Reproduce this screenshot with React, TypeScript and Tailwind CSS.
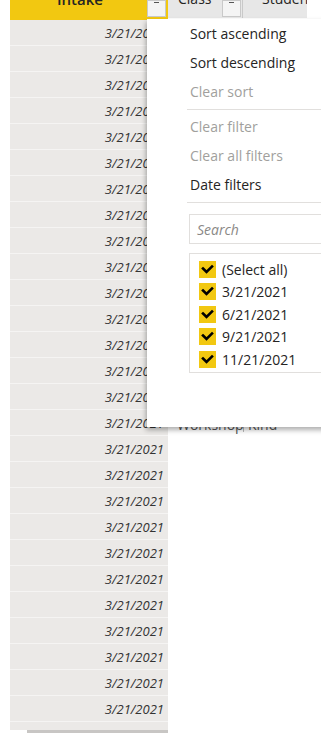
const dates = Array.from({ length: 27 }, () => '3/21/2021');

const menuItems = [
  { label: 'Sort ascending', disabled: false },
  { label: 'Sort descending', disabled: false },
  { label: 'Clear sort', disabled: true },
  { sep: true },
  { label: 'Clear filter', disabled: true },
  { label: 'Clear all filters', disabled: true },
  { label: 'Date filters', disabled: false },
  { sep: true },
];

const options = ['(Select all)', '3/21/2021', '6/21/2021', '9/21/2021', '11/21/2021'];

function HeaderButton() {
  return (
    <div className="w-[19px] h-[17px] bg-[#f4f4f4] border border-[#c9c9c9] flex items-start justify-center overflow-hidden">
      <span className="block w-[5px] h-[1px] bg-[#555] mt-[1px]" />
    </div>
  );
}

function Check() {
  return (
    <div className="w-[17px] h-[17px] bg-[#f2c811] flex items-center justify-center shrink-0">
      <svg width="13" height="13" viewBox="0 0 13 13">
        <path d="M2 5.5 L5.5 9 L11 3.5" fill="none" stroke="#000" strokeWidth="2.6" strokeLinecap="square" />
      </svg>
    </div>
  );
}

export default function App() {
  return (
    <div
      className="relative w-[321px] h-[738px] overflow-hidden bg-white text-[#252423]"
      style={{ fontFamily: '"Open Sans", "Noto Sans", sans-serif' }}
    >
      <div className="flex h-[730px] overflow-hidden">
        <div className="w-[10px] shrink-0" />

        {/* Intake column (selected) */}
        <div className="w-[158px] shrink-0 bg-[#ebe9e7]">
          <div className="relative h-[20px] bg-[#f2c811] overflow-hidden">
            <span className="absolute left-[47px] top-[-10px] text-[15px] font-semibold leading-[18px]">Intake</span>
            <div className="absolute left-[137px] top-0">
              <HeaderButton />
            </div>
          </div>
          {dates.map((d, i) => (
            <div
              key={i}
              className="h-[26px] border-b border-[#f5f4f3] flex items-center justify-end pr-[4px] pt-[2px] text-[13px] italic text-[#333]"
            >
              {d}
            </div>
          ))}
        </div>

        {/* other columns */}
        <div className="flex-1">
          <div className="flex h-[18px] bg-[#e7e7e7] w-[139px] overflow-hidden">
            <div className="relative w-[54px] text-[14px] leading-[18px]">
              <span className="absolute left-[10px] top-[-10px]">Class</span>
            </div>
            <HeaderButton />
            <div className="w-[2px] border-r border-[#c9c9c9]" />
            <div className="relative flex-1 text-[14px] leading-[18px]">
              <span className="absolute left-[19px] top-[-10px]">Student</span>
            </div>
          </div>
          <div className="h-[392px]" />
          <div className="flex h-[26px] w-[139px] items-center pt-[2px] text-[14px] text-[#555]">
            <div className="w-[75px] pl-[9px] overflow-hidden whitespace-nowrap">Workshop -</div>
            <div className="h-[16px] border-l border-[#bbb]" />
            <div className="pl-[4px] whitespace-nowrap">Kind</div>
          </div>
        </div>
      </div>

      {/* horizontal scrollbar */}
      <div className="h-[3px] ml-[27px] w-[141px] bg-[#c8c6c4]" />

      {/* filter popup */}
      <div className="absolute left-[147px] top-[19px] w-[190px] h-[408px] bg-white shadow-[-1px_3px_5px_rgba(0,0,0,0.32)]">
        {menuItems.map((m, i) =>
          'sep' in m ? (
            <div key={i} className="h-[6px] flex items-center pl-[40px]">
              <div className="h-[1px] w-full bg-[#e1dfdd]" />
            </div>
          ) : (
            <div
              key={i}
              className={`h-[29px] flex items-center pl-[43px] text-[14px] ${m.disabled ? 'text-[#a19f9d]' : 'text-[#252423]'}`}
            >
              {m.label}
            </div>
          )
        )}
        <div className="ml-[42px] mt-[9px] h-[30px] border border-[#e1dfdd] flex items-center pl-[7px] text-[14px] italic text-[#8a8886]">
          Search
        </div>
        <div className="ml-[42px] mt-[9px] h-[120px] border border-[#e1dfdd] pt-[4px] pl-[9px]">
          {options.map((o) => (
            <div key={o} className="h-[22.5px] flex items-center gap-[6px] text-[14px] text-[#252423]">
              <Check />
              <span>{o}</span>
            </div>
          ))}
        </div>
      </div>
    </div>
  );
}
